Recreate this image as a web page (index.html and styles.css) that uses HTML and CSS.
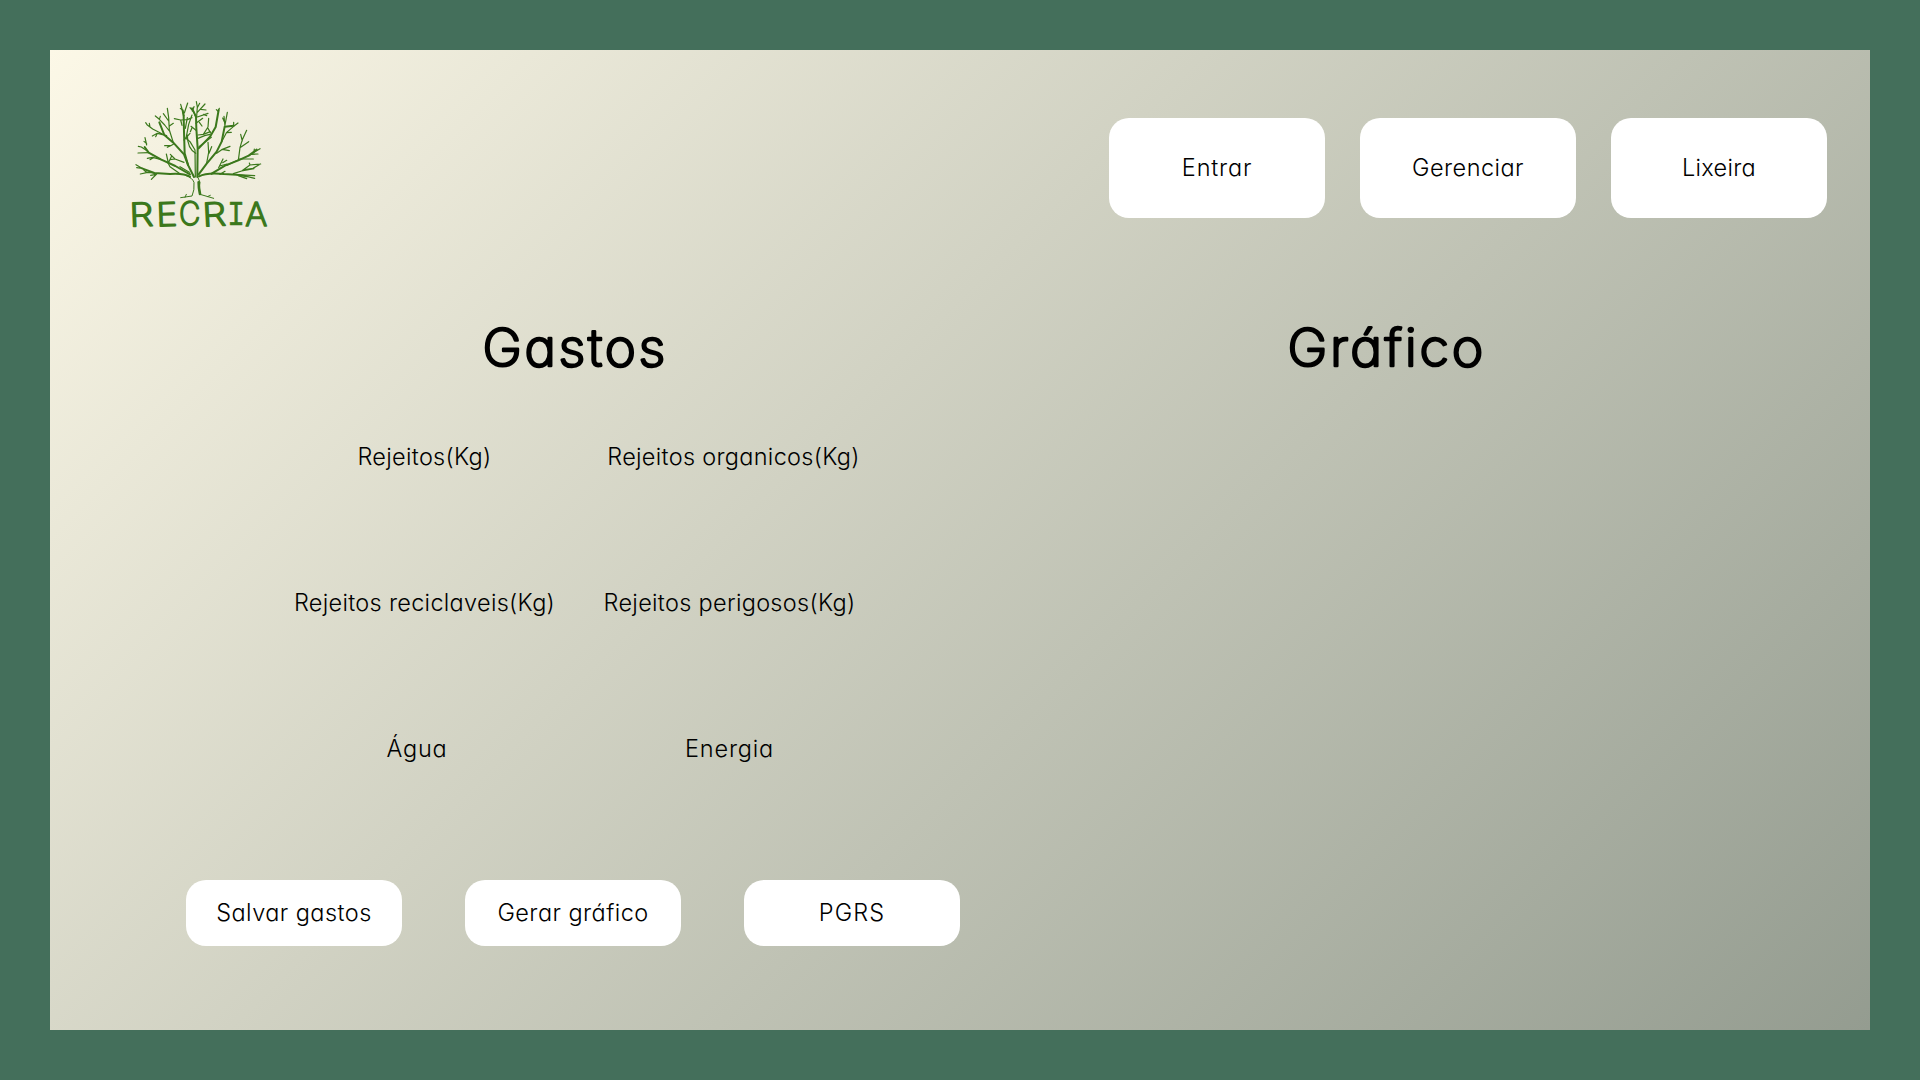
FILE: index.html
```html
<!DOCTYPE html>
<html lang="pt-BR">
<head>
<meta charset="utf-8">
<title>Recria</title>
<link rel="stylesheet" href="styles.css">
</head>
<body>
<main class="panel">
  <header class="header">
    <svg class="logo" viewBox="0 0 540 465" role="img" aria-label="Recria">
      <g class="trunk">
        <path d="M212 338L246 333Q254 316 252 292Q247 278 228 272M264 278L270 292Q264 310 270 328L311 340M225 337L229 328M292 335L301 331"/>
        <path class="thick" d="M266 292Q266 310 270 327"/>
      </g>
      <g class="limb">
        <path d="M262 276L263 190L259 130L258 95L246 70"/>
        <path d="M252 276L235 242L222 208L190 173L163 150L148 112"/>
        <path d="M234 240L224 205L222 140L221 94L218 76"/>
        <path d="M266 268L290 236L320 200L335 170L344 125L371 122"/>
        <path d="M267 274Q290 262 342 267L380 269L410 274"/>
        <path d="M240 275Q220 264 180 267L133 264L96 250"/>
        <path d="M240 268L196 243L154 224L116 203L104 186"/>
        <path d="M305 266L345 242L385 226L416 212L440 194"/>
        <path d="M266 190L300 155L317 126L326 75"/>
      </g>
      <g class="branch">
        <path d="M256 276L255 195L240 170L228 160L236 118L246 90M246 98L232 104L212 105L193 101M212 105L216 121"/>
        <path d="M257 205Q232 190 232 150M226 130L232 98M222 165L240 145M222 92L212 58M218 76L211 70M223 84L233 54"/>
        <path d="M257 96L252 82L240 68M247 78L252 65M260 94L262 66L259 50M262 68L269 55M262 82L285 57M272 73L288 75M262 96L294 85M281 88L290 92M258 115L278 100M258 136L243 124M246 128L241 140"/>
        <path d="M190 173L178 135L176 98L172 70M176 108L160 86M178 123L190 115M178 138L164 120L148 103L136 93M148 103L151 94M163 150L128 132L111 119L107 113M120 126L118 115M170 152L142 145L127 153M142 145L137 155M190 178L182 182L164 182M182 182L172 187"/>
        <path d="M222 232L195 222L181 208M195 222L180 224M238 262L210 245M175 234L169 207M175 234L185 213M154 224L128 217L112 220M130 218L120 224M116 203L84 204M112 198L94 186L85 184M110 180L105 158M110 176L102 169"/>
        <path d="M133 264L113 262L91 267M110 262L102 256M140 267L124 283M138 268L122 271M96 250L78 239M96 250L80 248M210 266L180 245L173 232"/>
        <path d="M264 150L280 148L301 140M264 160L284 152L300 148M280 148L294 126L296 100M294 130L302 144M268 112L276 123M267 185L304 157"/>
        <path d="M290 234L296 202L294 172M297 205L305 185M320 205L335 194L360 184M337 193L358 197M335 170L350 142L371 124L384 114M371 124L371 112M349 143L364 142M345 125L342 94M345 120L352 82M343 110L338 99M326 75L328 70M325 80L319 74"/>
        <path d="M385 226L390 188L397 164L410 136M397 168L392 148M392 187L416 170M326 248L339 222M329 243L351 237M338 233L350 226M350 241L390 222L430 222M416 212L450 191M432 203L433 192M425 208L444 207"/>
        <path d="M370 266L395 258L420 240L452 237M420 240L418 234M395 258L432 251M405 254L429 250L451 237M380 269L434 272M410 274L434 280M385 272L410 281M330 268L345 259"/>
      </g>
      <g class="wordmark">
        <text x="58" y="423" textLength="72" lengthAdjust="spacingAndGlyphs" transform="rotate(-2 95 390)">R</text>
        <text x="139" y="423" textLength="63" lengthAdjust="spacingAndGlyphs" transform="rotate(-2 170 390)">E</text>
        <text x="207" y="420" textLength="64" lengthAdjust="spacingAndGlyphs">C</text>
        <text x="277" y="423" textLength="71" lengthAdjust="spacingAndGlyphs" transform="rotate(-3 312 390)">R</text>
        <text class="slab" x="352" y="421" textLength="53" lengthAdjust="spacingAndGlyphs">I</text>
        <text x="406" y="422" textLength="66" lengthAdjust="spacingAndGlyphs">A</text>
      </g>
    </svg>
    <nav class="nav">
      <a class="button button-tall entrar">Entrar</a>
      <a class="button button-tall">Gerenciar</a>
      <a class="button button-tall lixeira">Lixeira</a>
    </nav>
  </header>
  <div class="content">
    <section class="expenses">
      <h2 class="title"><svg class="title-art" viewBox="0 0 220 80"><text x="18.5" y="56" textLength="185.5" lengthAdjust="spacingAndGlyphs">Gastos</text></svg></h2>
      <div class="fields">
        <span class="label">Rejeitos(Kg)</span>
        <span class="label organic">Rejeitos organicos(Kg)</span>
        <span class="label">Rejeitos reciclaveis(Kg)</span>
        <span class="label">Rejeitos perigosos(Kg)</span>
        <span class="label short water">Água</span>
        <span class="label short">Energia</span>
      </div>
      <div class="actions">
        <a class="button button-low">Salvar gastos</a>
        <a class="button button-low">Gerar gráfico</a>
        <a class="button button-low pgrs">PGRS</a>
      </div>
    </section>
    <section class="chart">
      <h2 class="title"><svg class="title-art" viewBox="0 0 220 80"><text x="11.5" y="56" textLength="198.5" lengthAdjust="spacingAndGlyphs">Gráfico</text></svg></h2>
    </section>
  </div>
</main>
</body>
</html>
```
FILE: styles.css
```css
* { box-sizing: border-box; }
body {
  margin: 0;
  width: 1920px;
  height: 1080px;
  padding: 50px;
  overflow: hidden;
  background: #446f5b;
  color: #000;
  font-family: Inter, "Open Sans", sans-serif;
  font-feature-settings: "cv11" 1;
}
.panel {
  width: 1820px;
  height: 980px;
  background: linear-gradient(135deg, #fcf8e7, #949c90);
}
.header {
  display: flex;
  justify-content: space-between;
  height: 205px;
  padding: 35px 43px 0 60px;
}
.logo { width: 180px; height: 155px; }
.logo path { fill: none; stroke: #3b781c; stroke-linecap: round; stroke-linejoin: round; }
.trunk path { stroke-width: 3; }
.trunk .thick { stroke-width: 8; }
.limb path { stroke-width: 6; }
.branch path { stroke-width: 3.6; }
.wordmark {
  fill: #3b781c;
  stroke: #3b781c;
  stroke-width: 5;
  stroke-linejoin: round;
  font-size: 97px;
  font-weight: 200;
}
.slab { font-family: "Liberation Mono", monospace; font-size: 106px; stroke-width: 1.5; }
.nav { display: flex; gap: 35px; padding-top: 33px; }
.button {
  display: flex;
  align-items: center;
  justify-content: center;
  width: 216px;
  height: 66px;
  border-radius: 20px;
  background: #fff;
  font-size: 23.5px;
  font-weight: 300;
  letter-spacing: 0.45px;
}
.button-tall { height: 99.5px; }
.button-low { padding-bottom: 2px; }
.entrar { letter-spacing: 0.8px; }
.lixeira { letter-spacing: 0.3px; }
.pgrs { letter-spacing: 1.1px; }
.content { display: flex; }
.expenses { width: 1048px; }
.chart { flex: 1; }
.title { margin: 0; height: 125px; padding-top: 55px; }
.title-art { display: block; width: 220px; height: 80px; overflow: visible; }
.expenses .title-art { margin-left: 414px; }
.chart .title-art { margin-left: 178px; }
.title-art text {
  font-size: 51.5px;
  font-weight: 200;
  letter-spacing: 2.6px;
  stroke: #000;
  stroke-width: 2.6px;
  stroke-linejoin: round;
}
.fields {
  display: grid;
  grid-template-columns: 305px 305px;
  grid-auto-rows: 146px;
  margin-left: 222px;
  padding-top: 62px;
}
.label {
  justify-self: center;
  line-height: 30px;
  font-size: 23.5px;
  font-weight: 300;
  letter-spacing: 0.3px;
  white-space: nowrap;
}
.short { letter-spacing: 0.8px; }
.organic { margin-left: 8px; }
.water { margin-right: 15px; }
.actions { display: flex; gap: 63px; margin-left: 136px; }
```
